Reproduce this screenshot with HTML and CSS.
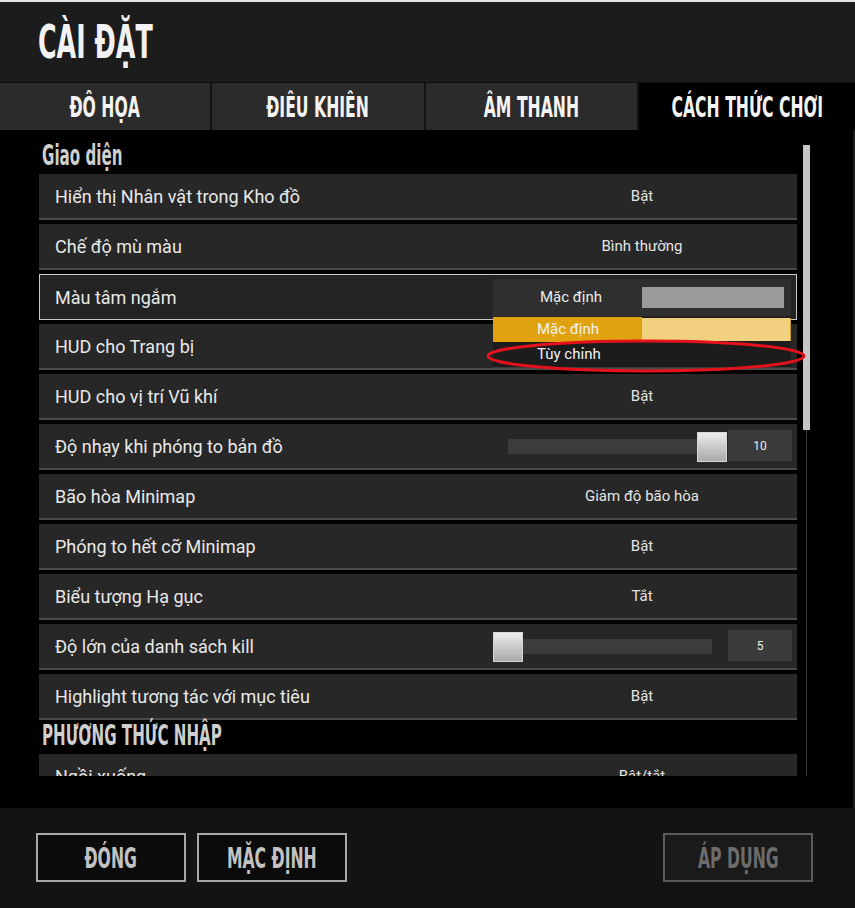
FILE: index.html
```html
<!DOCTYPE html>
<html lang="vi">
<head>
<meta charset="utf-8">
<title>Cài đặt</title>
<link rel="stylesheet" href="styles.css">
</head>
<body>
<div class="app">
  <div class="topstrip"></div>
  <header class="header">
    <h1 class="title"><span class="cond cond-left">CÀI ĐẶT</span></h1>
  </header>
  <nav class="tabs">
    <div class="tab"><span class="cond">ĐÔ HỌA</span></div>
    <div class="tab"><span class="cond">ĐIÊU KHIÊN</span></div>
    <div class="tab"><span class="cond">ÂM THANH</span></div>
    <div class="tab tab-active"><span class="cond">CÁCH THỨC CHƠI</span></div>
  </nav>
  <main class="main">
    <div class="viewport">
      <div class="list">
        <div class="section"><span class="cond cond-left">Giao diện</span></div>
        <div class="row"><span class="label">Hiển thị Nhân vật trong Kho đồ</span><span class="value">Bật</span></div>
        <div class="row"><span class="label">Chế độ mù màu</span><span class="value">Bình thường</span></div>
        <div class="row row-focus">
          <span class="label">Màu tâm ngắm</span>
          <div class="dropdown">
            <span class="dd-text">Mặc định</span>
            <span class="dd-swatch"></span>
            <div class="dd-menu">
              <div class="dd-item dd-item-sel"><span class="dd-item-text">Mặc định</span><span class="dd-item-swatch"></span></div>
              <div class="dd-item"><span class="dd-item-text">Tùy chỉnh</span></div>
            </div>
          </div>
        </div>
        <div class="row"><span class="label">HUD cho Trang bị</span><span class="value">Bật</span></div>
        <div class="row"><span class="label">HUD cho vị trí Vũ khí</span><span class="value">Bật</span></div>
        <div class="row">
          <span class="label">Độ nhạy khi phóng to bản đồ</span>
          <div class="slider">
            <div class="track"><div class="thumb" style="left:189px"></div></div>
            <div class="numbox">10</div>
          </div>
        </div>
        <div class="row"><span class="label">Bão hòa Minimap</span><span class="value">Giảm độ bão hòa</span></div>
        <div class="row"><span class="label">Phóng to hết cỡ Minimap</span><span class="value">Bật</span></div>
        <div class="row"><span class="label">Biểu tượng Hạ gục</span><span class="value">Tắt</span></div>
        <div class="row">
          <span class="label">Độ lớn của danh sách kill</span>
          <div class="slider">
            <div class="track"><div class="thumb" style="left:-15px"></div></div>
            <div class="numbox">5</div>
          </div>
        </div>
        <div class="row"><span class="label">Highlight tương tác với mục tiêu</span><span class="value">Bật</span></div>
        <div class="section"><span class="cond cond-left">PHƯƠNG THỨC NHẬP</span></div>
        <div class="row"><span class="label">Ngồi xuống</span><span class="value">Bật/tắt</span></div>
      </div>
    </div>
    <div class="scrollbar">
      <div class="sb-thumb"></div>
      <div class="sb-track"></div>
    </div>
    <svg class="mark" width="335" height="43" viewBox="0 0 335 43"><ellipse cx="166" cy="21" rx="158" ry="15" fill="none" stroke="#e3121c" stroke-width="3"/></svg>
  </main>
  <footer class="footer">
    <button class="btn"><span class="cond">ĐÓNG</span></button>
    <button class="btn"><span class="cond">MẶC ĐỊNH</span></button>
    <button class="btn btn-disabled"><span class="cond">ÁP DỤNG</span></button>
  </footer>
</div>
</body>
</html>
```
FILE: styles.css
```css
html, body {
  margin: 0;
  padding: 0;
  background: #000;
}
body {
  font-family: Roboto, "Noto Sans", sans-serif;
  color: #e8e8e8;
}
.app {
  width: 855px;
  height: 908px;
  display: flex;
  flex-direction: column;
  overflow: hidden;
}
.topstrip {
  height: 2px;
  background: #e6e6e6;
  flex: none;
}
.cond {
  display: inline-block;
  font-family: "DejaVu Sans Condensed", "DejaVu Sans", sans-serif;
  font-weight: bold;
  transform: scaleX(0.6);
  transform-origin: center;
  white-space: nowrap;
}
.cond-left {
  transform-origin: left center;
}
.header {
  height: 80px;
  flex: none;
  background: #1c1c1c;
  display: flex;
  align-items: center;
  padding-left: 38px;
  box-sizing: border-box;
}
.title {
  margin: 0;
  font-size: 47px;
  line-height: 1.2;
  color: #f2f2f2;
  font-weight: normal;
}
.tabs {
  height: 48px;
  flex: none;
  display: grid;
  grid-template-columns: 210px 212px 211px 216px;
  column-gap: 2px;
  background: #121212;
  border-top: 1px solid #0e0e0e;
  box-sizing: border-box;
}
.tab {
  background: #2b2b2b;
  display: flex;
  align-items: center;
  justify-content: center;
  font-size: 29px;
  color: #f4f4f4;
  overflow: hidden;
}
.tab-active {
  background: #000;
}
.main {
  position: relative;
  flex: none;
  height: 678px;
  display: flex;
  padding: 10px 0 0 39px;
  box-sizing: border-box;
  background: #000;
  border-right: 2px solid #1a1a1a;
}
.viewport {
  width: 758px;
  height: 636px;
  overflow: hidden;
  flex: none;
}
.list {
  display: flex;
  flex-direction: column;
}
.section {
  height: 34px;
  display: flex;
  align-items: flex-end;
  padding-left: 3px;
  padding-bottom: 1px;
  box-sizing: border-box;
  font-size: 28px;
  line-height: 1.2;
  color: #cfcfcf;
}
.row {
  height: 46px;
  flex: none;
  display: flex;
  align-items: center;
  background: #272727;
  border-bottom: 2px solid #4a4a4a;
  box-sizing: border-box;
  padding-left: 16px;
  position: relative;
}
.row + .row {
  margin-top: 4px;
}
.label {
  flex: 1;
  font-size: 18px;
  color: #e9e9e9;
  white-space: nowrap;
}
.value {
  width: 310px;
  text-align: center;
  font-size: 15px;
  color: #e4e4e4;
}
.row-focus {
  border: 1px solid #c8c8c8;
  padding-left: 15px;
  background: #232323;
}
.dropdown {
  position: relative;
  width: 298px;
  height: 37px;
  margin-right: 5px;
  background: #2f2f2f;
  display: flex;
  align-items: center;
}
.dd-text {
  width: 149px;
  box-sizing: border-box;
  padding-left: 47px;
  font-size: 15px;
  color: #ececec;
}
.dd-swatch {
  width: 142px;
  height: 21px;
  background: #9a9a9a;
}
.dd-menu {
  position: absolute;
  top: 38px;
  left: 0;
  width: 298px;
  background: #1c1c1c;
  border-bottom: 1px solid #3a3a3a;
  z-index: 2;
}
.dd-item {
  height: 25px;
  display: flex;
  align-items: center;
}
.dd-item-text {
  width: 149px;
  box-sizing: border-box;
  padding-left: 44px;
  font-size: 15px;
  color: #f2f2f2;
  height: 100%;
  display: flex;
  align-items: center;
}
.dd-item-sel .dd-item-text {
  background: #e0a20f;
}
.dd-item-swatch {
  flex: 1;
  height: 23px;
  background: #f1d17f;
  border-right: 1px solid #c89a2a;
}
.mark {
  position: absolute;
  left: 480px;
  top: 205px;
  z-index: 3;
}
.slider {
  width: 310px;
  padding-left: 21px;
  box-sizing: border-box;
  display: flex;
  align-items: center;
}
.track {
  position: relative;
  width: 204px;
  height: 15px;
  background: #3c3c3c;
}
.thumb {
  position: absolute;
  top: -7px;
  width: 30px;
  height: 30px;
  box-sizing: border-box;
  border: 1px solid #d6d6d6;
  background: linear-gradient(#ececec, #a9a9a9);
}
.numbox {
  margin-left: 16px;
  width: 64px;
  height: 32px;
  background: #3b3b3b;
  border-bottom: 1px solid #333;
  box-sizing: border-box;
  display: flex;
  align-items: center;
  justify-content: center;
  font-size: 12px;
  color: #eee;
}
.scrollbar {
  width: 7px;
  margin-left: 6px;
  margin-top: 5px;
  height: 631px;
  display: flex;
  flex-direction: column;
  align-items: center;
}
.sb-thumb {
  width: 7px;
  height: 285px;
  background: #c6c6c6;
  flex: none;
}
.sb-track {
  flex: 1;
  width: 1px;
  background: #3a3a3a;
}
.footer {
  flex: 1;
  background: #131313;
  display: flex;
  align-items: flex-start;
  gap: 11px;
  padding: 25px 42px 0 36px;
  box-sizing: border-box;
}
.btn {
  width: 150px;
  height: 49px;
  box-sizing: border-box;
  border: 2px solid #a8a8a8;
  background: #0b0b0b;
  color: #c2c2c2;
  font-size: 29px;
  display: flex;
  align-items: center;
  justify-content: center;
  padding: 0;
  overflow: hidden;
}
.btn-disabled {
  margin-left: auto;
  border-color: #5c5c5c;
  background: #1a1a1a;
  color: #6c6c6c;
}
```
